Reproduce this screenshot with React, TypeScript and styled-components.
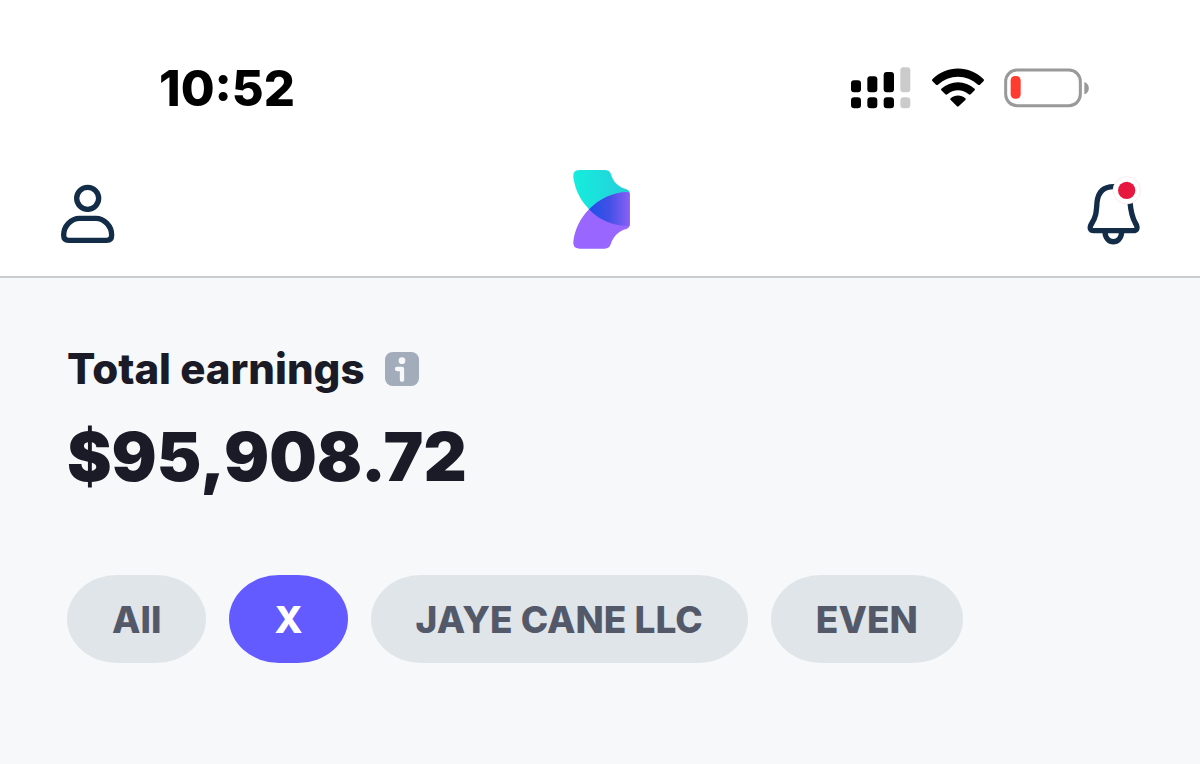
import React, { useState } from 'react';
import styled, { createGlobalStyle } from 'styled-components';

const GlobalStyle = createGlobalStyle`
  *, *::before, *::after { box-sizing: border-box; }
  body {
    margin: 0;
    background: #f6f8fa;
    font-family: Inter, "Liberation Sans", sans-serif;
    color: #1b1b27;
  }
  svg { display: block; overflow: visible; }
`;

const Top = styled.header`
  background: #ffffff;
  border-bottom: 2px solid #cbcccd;
`;

const StatusBar = styled.div`
  display: flex;
  align-items: flex-start;
  justify-content: space-between;
  padding: 60px 109px 0 159px;
  color: #000000;
`;

const Clock = styled.time`
  font-size: 49px;
  line-height: 58px;
  font-weight: 800;
`;

const StatusIcons = styled.div`
  display: flex;
  align-items: center;
  gap: 20px;
  height: 56px;
`;

const Nav = styled.nav`
  display: grid;
  grid-template-columns: 1fr auto 1fr;
  align-items: end;
  height: 158px;
  padding: 0 58px 28px 60px;
`;

const IconButton = styled.button<{ $end?: boolean }>`
  justify-self: ${(p) => (p.$end ? 'end' : 'start')};
  padding: 0;
  border: 0;
  background: none;
  cursor: pointer;
`;

const Main = styled.main`
  padding: 67px;
`;

const TitleRow = styled.div`
  display: flex;
  align-items: center;
  gap: 20px;
`;

const Title = styled.h1`
  margin: 0;
  font-size: 42px;
  line-height: 48px;
  font-weight: 800;
`;

const Amount = styled.p`
  margin: 24px 0 78px;
  font-size: 67px;
  line-height: 80px;
  font-weight: 900;
`;

const Chips = styled.div`
  display: flex;
  flex-wrap: wrap;
  gap: 23px;
`;

const Chip = styled.button<{ $active: boolean }>`
  height: 88px;
  padding: 0 45px;
  border: 0;
  border-radius: 50px / 44px;
  background: ${(p) => (p.$active ? '#635bff' : '#e0e5e9')};
  color: ${(p) => (p.$active ? '#ffffff' : '#545969')};
  font: inherit;
  font-size: 37px;
  font-weight: 800;
  cursor: pointer;
`;

const SignalIcon = () => (
  <svg width="60" height="42" viewBox="35 50 180 126" role="img" aria-label="Signal">
    <rect x="35" y="90" width="30" height="36" rx="9" />
    <rect x="84" y="78" width="30" height="48" rx="9" />
    <rect x="133" y="65" width="31" height="61" rx="9" />
    <rect x="183" y="51" width="30" height="75" rx="9" fill="#cbcbcb" />
    <rect x="35" y="141" width="30" height="33" rx="10" />
    <rect x="84" y="141" width="30" height="33" rx="10" />
    <rect x="133" y="141" width="31" height="33" rx="10" />
    <rect x="183" y="141" width="30" height="33" rx="10" fill="#cbcbcb" />
  </svg>
);

const WifiIcon = () => (
  <svg width="54" height="42" viewBox="273 50 162 126" role="img" aria-label="Wi-Fi">
    <path d="M277 87C320 44 388 44 431 87Q433 90 431 92L420 103Q417 105 414 103C380 71 328 71 294 103Q291 105 288 103L277 92Q275 90 277 87Z" />
    <path d="M304 115C332 89 376 89 404 115Q406 118 404 120L392 132Q389 134 386 132C367 116 341 116 322 132Q319 134 316 132L304 120Q302 118 304 115Z" />
    <path d="M332 144C345 133 363 133 376 144Q379 146 376 149L356 168Q353 170 351 168L332 149Q329 146 332 144Z" />
  </svg>
);

const BatteryIcon = () => (
  <svg width="86" height="42" viewBox="496 50 258 126" role="img" aria-label="Battery low">
    <rect x="498" y="59" width="224" height="107" rx="34" fill="none" stroke="#99999b" strokeWidth="9" />
    <rect x="513" y="77" width="30" height="68" rx="13" fill="#ff3b30" />
    <path d="M734 95C752 100 752 127 734 132Z" fill="#99999b" />
  </svg>
);

const UserIcon = () => (
  <svg width="60" height="64" viewBox="30 42 180 192" fill="none" stroke="#132c47" strokeWidth="16" strokeLinejoin="round">
    <circle cx="113" cy="85" r="33" />
    <path d="M89 145H137C163 145 185 169 185 195Q185 211 170 211H56Q41 211 41 195C41 169 63 145 89 145Z" />
  </svg>
);

const LogoIcon = () => (
  <svg width="58" height="80" viewBox="66 23 174 240" role="img" aria-label="Home">
    <defs>
      <linearGradient id="teal" x1="0" y1="0" x2="1" y2="0">
        <stop offset="0" stopColor="#14eedd" />
        <stop offset="1" stopColor="#26cddb" />
      </linearGradient>
      <linearGradient id="blue" x1="0" y1="0" x2="1" y2="0">
        <stop offset="0" stopColor="#1c50e8" />
        <stop offset="0.5" stopColor="#4350e6" />
        <stop offset="1" stopColor="#8a60f6" />
      </linearGradient>
    </defs>
    <path d="M89 29H164Q179 29 183 42C190 67 207 81 229 87Q239 90 239 99V192C195 200 154 184 117 147C90 118 75 88 70 51Q67 29 89 29Z" fill="url(#teal)" />
    <path d="M229 95Q239 94 239 102V192Q239 203 229 206C207 211 190 227 182 252Q178 265 164 265H89Q67 265 70 243C75 207 90 175 117 147C150 114 188 97 229 95Z" fill="#9966ff" />
    <path d="M117 147C150 114 188 97 229 95Q239 94 239 102V197C190 197 152 183 117 147Z" fill="url(#blue)" />
  </svg>
);

const BellIcon = () => (
  <svg width="56" height="72" viewBox="48 33 168 216" fill="none">
    <g stroke="#132c47" strokeWidth="16" strokeLinejoin="round">
      <path d="M131 65C99 65 84 84 81 112C79 145 77 156 66 174C56 190 61 197 72 197H189C200 197 206 190 196 174C186 157 183 145 180 112C178 84 163 65 131 65Z" />
      <path d="M105 201C107 240 153 240 155 201" />
    </g>
    <circle cx="170" cy="76" r="41" fill="#ffffff" stroke="#fbdfe5" strokeWidth="2" />
    <circle cx="170" cy="76" r="26" fill="#e6183f" />
  </svg>
);

const InfoIcon = () => (
  <svg width="34" height="34" viewBox="0 0 102 102" fill="none">
    <rect width="102" height="102" rx="23" fill="#a3acba" />
    <circle cx="51" cy="26" r="10" fill="#f6f8fa" />
    <path d="M36 51H51V83" stroke="#f6f8fa" strokeWidth="13" strokeLinecap="round" strokeLinejoin="round" />
  </svg>
);

const filters = ['All', 'X', 'JAYE CANE LLC', 'EVEN'];

export default function App() {
  const [selected, setSelected] = useState('X');
  return (
    <>
      <GlobalStyle />
      <Top>
        <StatusBar>
          <Clock>10:52</Clock>
          <StatusIcons>
            <SignalIcon />
            <WifiIcon />
            <BatteryIcon />
          </StatusIcons>
        </StatusBar>
        <Nav>
          <IconButton aria-label="Profile"><UserIcon /></IconButton>
          <LogoIcon />
          <IconButton $end aria-label="Notifications"><BellIcon /></IconButton>
        </Nav>
      </Top>
      <Main>
        <TitleRow>
          <Title>Total earnings</Title>
          <IconButton aria-label="About total earnings"><InfoIcon /></IconButton>
        </TitleRow>
        <Amount>$95,908.72</Amount>
        <Chips>
          {filters.map((name) => (
            <Chip
              key={name}
              $active={name === selected}
              aria-pressed={name === selected}
              onClick={() => setSelected(name)}
            >
              {name}
            </Chip>
          ))}
        </Chips>
      </Main>
    </>
  );
}
